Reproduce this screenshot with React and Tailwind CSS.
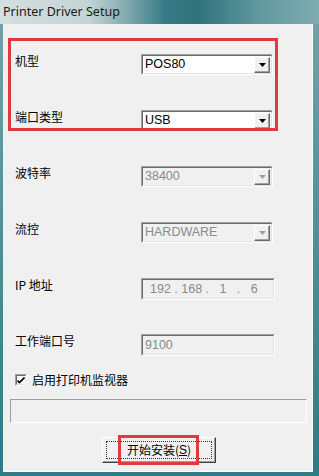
import { useState } from "react";

const cjk = { fontFamily: '"Noto Sans CJK SC", "Noto Sans", sans-serif' };
const latin = { fontFamily: '"Liberation Sans", Arial, sans-serif' };

function Arrow({ disabled }) {
  return (
    <div className="w-[16px] h-[16px] bg-[#f0f0f0] border border-t-white border-l-white border-r-[#696969] border-b-[#696969] flex items-center justify-center shadow-[inset_-1px_-1px_0_#a0a0a0]">
      <svg width="7" height="4" viewBox="0 0 7 4">
        <path d="M0 0h7L3.5 4z" fill={disabled ? "#a0a0a0" : "#000"} />
      </svg>
    </div>
  );
}

function Combo({ value, disabled }) {
  return (
    <div
      className={`w-[132px] h-[21px] flex items-center border border-t-[#a0a0a0] border-l-[#a0a0a0] border-r-white border-b-white ${
        disabled ? "bg-[#f0f0f0]" : "bg-white"
      }`}
    >
      <div className="flex-1 h-full flex items-center justify-between border border-t-[#696969] border-l-[#696969] border-r-[#e3e3e3] border-b-[#e3e3e3] pr-px">
        <span
          className={`pl-[2px] text-[12.5px] leading-none ${disabled ? "text-[#8a8a8a]" : "text-black"}`}
          style={latin}
        >
          {value}
        </span>
        <Arrow disabled={disabled} />
      </div>
    </div>
  );
}

function Field({ children }) {
  return (
    <div className="w-[134px] h-[22px] flex items-center border border-t-[#a0a0a0] border-l-[#a0a0a0] border-r-white border-b-white bg-[#f0f0f0]">
      <div className="flex-1 h-full flex items-center border border-t-[#696969] border-l-[#696969] border-r-[#e3e3e3] border-b-[#e3e3e3] text-[12.5px] text-[#8a8a8a]" style={latin}>
        {children}
      </div>
    </div>
  );
}

function Row({ label, h = "h-[56px]", children }) {
  return (
    <div className={`flex items-start ${h}`}>
      <div className="w-[126px] text-[12px] leading-[14px] text-black" style={cjk}>
        {label}
      </div>
      {children}
    </div>
  );
}

export default function App() {
  const [monitor, setMonitor] = useState(true);

  return (
    <div className="w-[319px] h-[476px] bg-[#3f8791] flex flex-col overflow-hidden">
      <div className="h-[24px] flex items-center pl-[3px] bg-[linear-gradient(90deg,#d4dfdf_0%,#c3d4d5_28%,#7ea9ae_40%,#357a84_52%,#2f727c_62%,#5e979d_80%,#7fadb1_100%)]">
        <span className="text-[12.5px] text-[#1a1a1a]" style={{ fontFamily: '"Noto Sans", "Open Sans", sans-serif' }}>
          Printer Driver Setup
        </span>
      </div>
      <div className="flex-1 flex pl-[3px] pr-[6px] pb-[4px] bg-[linear-gradient(180deg,#6fa2a8,#2e7a85)]">
        <div className="relative flex-1 bg-[#f0f0f0] border-r border-b border-white flex flex-col pt-[30px]">
          <div className="pl-[12px] flex flex-col">
            <Row label="机型">
              <Combo value="POS80" />
            </Row>
            <Row label="端口类型">
              <Combo value="USB" />
            </Row>
            <Row label="波特率">
              <Combo value="38400" disabled />
            </Row>
            <Row label="流控">
              <Combo value="HARDWARE" disabled />
            </Row>
            <Row label="IP 地址">
              <Field>
                <span className="pl-[7px] whitespace-pre">192 . 168 .   1   .   6</span>
              </Field>
            </Row>
            <Row label="工作端口号" h="h-[40px]">
              <Field>
                <span className="pl-[2px]">9100</span>
              </Field>
            </Row>
          </div>
          <label className="flex items-center pl-[12px] h-[14px] mt-[-1px] gap-[5px] cursor-pointer">
            <span className="w-[12px] h-[12px] bg-white border border-t-[#a0a0a0] border-l-[#a0a0a0] border-r-white border-b-white flex items-center justify-center">
              <span className="w-[10px] h-[10px] border border-t-[#696969] border-l-[#696969] border-r-[#e3e3e3] border-b-[#e3e3e3] flex items-center justify-center">
                {monitor && (
                  <svg width="8" height="7" viewBox="0 0 8 7">
                    <path d="M0.5 3.5l2 2 5-5" stroke="#000" strokeWidth="1.7" fill="none" />
                  </svg>
                )}
              </span>
            </span>
            <input type="checkbox" className="hidden" checked={monitor} onChange={(e) => setMonitor(e.target.checked)} />
            <span className="text-[12px] leading-[14px] text-black" style={cjk}>
              启用打印机监视器
            </span>
          </label>
          <div className="ml-[7px] mr-[5px] mt-[12px] h-[24px] border border-t-[#a0a0a0] border-l-[#a0a0a0] border-r-white border-b-white bg-[#f0f0f0]" />
          <div className="flex mt-[14px] pl-[99px]">
            <button className="w-[114px] h-[26px] border border-t-white border-l-white border-r-[#404040] border-b-[#404040] bg-[#f0f0f0] shadow-[inset_-1px_-1px_0_#a0a0a0] p-[3px]">
              <div className="w-full h-full border border-dotted border-[#333] flex items-center justify-center text-[12px] text-black" style={cjk}>
                开始安装(<span className="underline" style={latin}>S</span>)
              </div>
            </button>
          </div>

          <div className="absolute left-[5px] top-[14px] w-[270px] h-[93px] border-[3px] border-[#e3393c] pointer-events-none" />
          <div className="absolute left-[115px] top-[411px] w-[81px] h-[30px] border-[3px] border-[#e3393c] pointer-events-none" />
        </div>
      </div>
    </div>
  );
}
